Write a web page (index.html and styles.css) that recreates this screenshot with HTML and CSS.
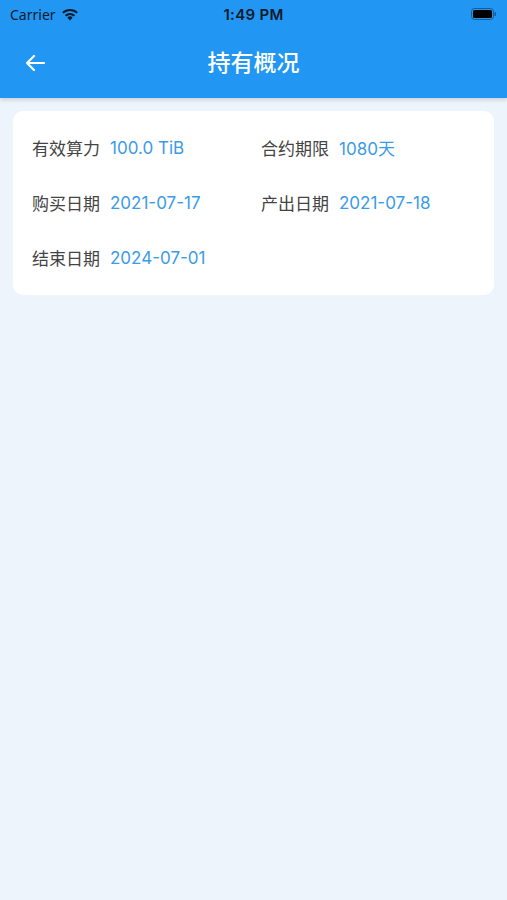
FILE: index.html
```html
<!DOCTYPE html>
<html lang="zh-CN">
<head>
  <meta charset="UTF-8">
  <meta name="viewport" content="width=device-width, initial-scale=1.0">
  <title>持有概况</title>
  <link rel="stylesheet" href="styles.css">
</head>
<body>
  <div class="header">
    <div class="status-bar">
      <div class="status-left">
        <span>Carrier</span>
        <svg class="wifi" width="18" height="13" viewBox="0 0 18 13">
          <path d="M9 12.5 L6.3 9.6 A3.9 3.9 0 0 1 11.7 9.6 Z" fill="#0a1a2a"/>
          <path d="M4.6 7.8 A6.3 6.3 0 0 1 13.4 7.8" stroke="#0a1a2a" stroke-width="2" fill="none"/>
          <path d="M1.8 4.9 A10.2 10.2 0 0 1 16.2 4.9" stroke="#0a1a2a" stroke-width="2" fill="none"/>
        </svg>
      </div>
      <div class="status-time">1:49 PM</div>
      <div class="status-right">
        <svg width="26" height="12" viewBox="0 0 26 12">
          <rect x="0.5" y="0.5" width="22" height="11" rx="3" fill="none" stroke="#1a5a8c" stroke-width="1"/>
          <rect x="2" y="2" width="19" height="8" rx="1.5" fill="#000"/>
          <rect x="23.5" y="4" width="1.5" height="4" rx="0.7" fill="#1a5a8c"/>
        </svg>
      </div>
    </div>
    <div class="nav-bar">
      <svg class="back" width="22" height="22" viewBox="0 0 22 22">
        <path d="M20 11 H3 M10 4 L3 11 L10 18" stroke="#fff" stroke-width="2.2" fill="none" stroke-linecap="round" stroke-linejoin="round"/>
      </svg>
      <div class="title">持有概况</div>
    </div>
  </div>

  <div class="card">
    <div class="item"><span class="label">有效算力</span><span class="value">100.0 TiB</span></div>
    <div class="item"><span class="label">合约期限</span><span class="value">1080天</span></div>
    <div class="item"><span class="label">购买日期</span><span class="value">2021-07-17</span></div>
    <div class="item"><span class="label">产出日期</span><span class="value">2021-07-18</span></div>
    <div class="item"><span class="label">结束日期</span><span class="value">2024-07-01</span></div>
  </div>
</body>
</html>
```

FILE: styles.css
```css
body {
  margin: 0;
  background-color: #eef4fb;
  font-family: "Noto Sans", "Noto Sans CJK SC", sans-serif;
  min-height: 900px;
}
.header {
  background-color: #2196f3;
  height: 98px;
  box-shadow: 0 2px 4px rgba(0, 0, 0, 0.15);
}
.status-bar {
  height: 28px;
  display: flex;
  align-items: center;
  justify-content: space-between;
  padding: 0 10px;
  font-size: 14px;
  color: #0a1a2a;
}
.status-left {
  display: flex;
  align-items: center;
  gap: 5px;
  width: 120px;
}
.status-time {
  font-weight: 600;
  font-family: "Inter", sans-serif;
  font-size: 15px;
  letter-spacing: 0.3px;
}
.status-right {
  width: 120px;
  display: flex;
  justify-content: flex-end;
}
.nav-bar {
  height: 70px;
  display: flex;
  align-items: center;
  position: relative;
}
.back {
  margin-left: 24px;
}
.title {
  position: absolute;
  left: 0;
  right: 0;
  text-align: center;
  color: #fff;
  font-family: "Noto Sans CJK SC", sans-serif;
  font-size: 23px;
  font-weight: 500;
  pointer-events: none;
  margin-top: -5px;
}
.card {
  background-color: #fff;
  margin: 13px 13px 0 13px;
  border-radius: 10px;
  padding: 9px 19px 10px 19px;
  display: grid;
  grid-template-columns: 229px 1fr;
  grid-auto-rows: 55px;
}
.item {
  display: flex;
  align-items: center;
  gap: 10px;
  font-size: 17px;
}
.label {
  color: #444;
  font-family: "Noto Sans CJK SC", sans-serif;
}
.value {
  color: #3b9be6;
  font-family: "Inter", "Noto Sans CJK SC", sans-serif;
}
```
